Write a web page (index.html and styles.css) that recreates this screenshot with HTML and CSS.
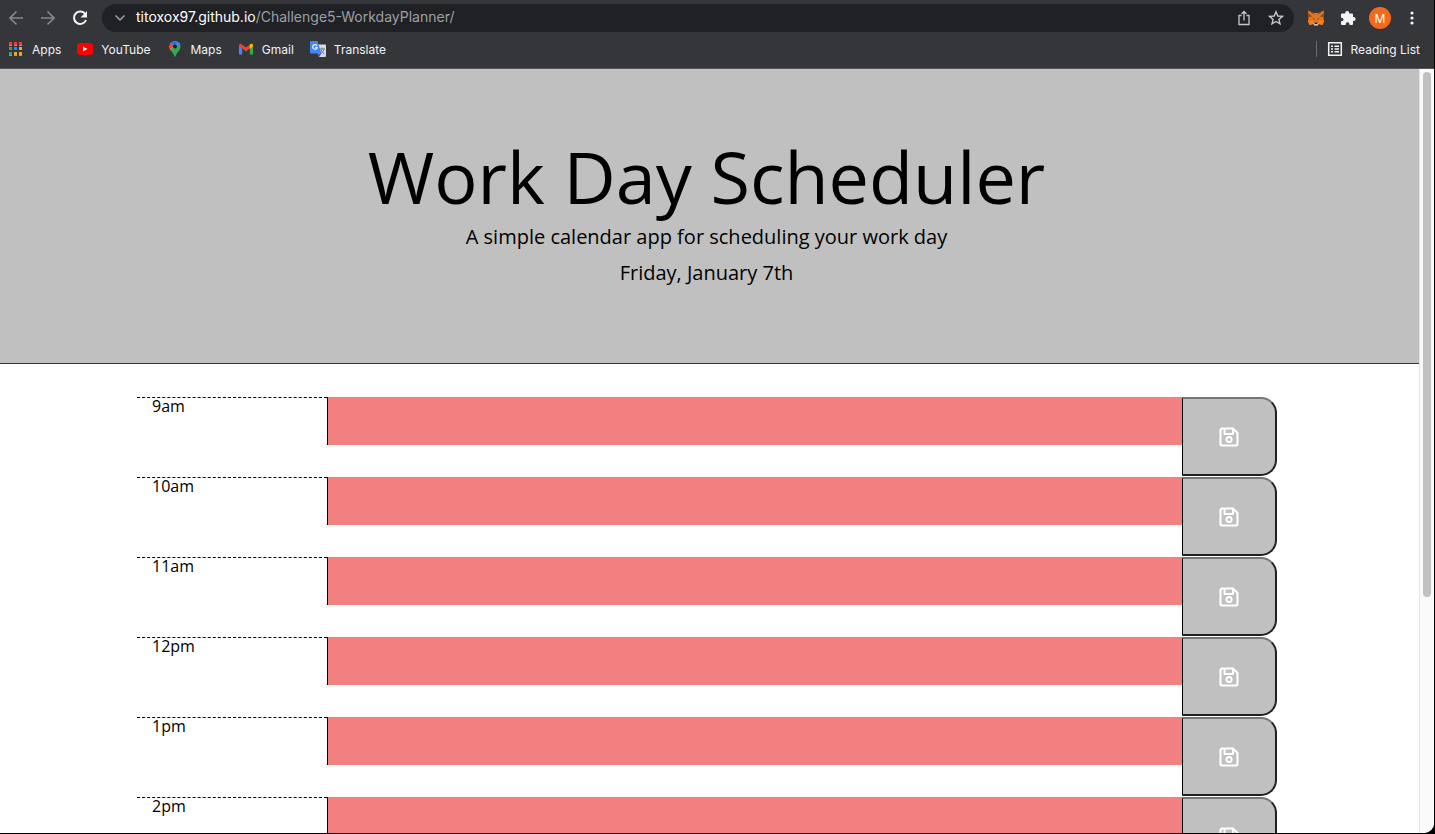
FILE: index.html
```html
<!DOCTYPE html>
<html lang="en">
<head>
<meta charset="utf-8">
<title>Work Day Scheduler</title>
<link rel="stylesheet" href="styles.css">
</head>
<body>
<svg class="defs" aria-hidden="true">
  <symbol id="save" viewBox="0 0 20 20"><g fill="none" stroke="#fff" stroke-width="2" stroke-linejoin="round"><path d="M2.500 1.500H14L18.500 6v11q0 1.500-1.500 1.500H3Q1.500 18.500 1.500 17V3q0-1.500 1.500-1.500z"/><path d="M5.500 1.500V7H14V1.500"/><circle cx="10" cy="12.500" r="2.600"/></g></symbol>
</svg>
<div class="window">
  <nav class="toolbar">
    <button class="tool dim" aria-label="Back"><svg width="16" height="16" viewBox="0 0 16 16"><path d="M15 8H2.500M8.500 1.500L2 8l6.500 6.500" fill="none" stroke="currentColor" stroke-width="1.700"/></svg></button>
    <button class="tool dim" aria-label="Forward"><svg width="16" height="16" viewBox="0 0 16 16"><path d="M1 8h12.500M7.500 1.500L14 8l-6.500 6.500" fill="none" stroke="currentColor" stroke-width="1.700"/></svg></button>
    <button class="tool" aria-label="Reload"><svg width="16" height="16" viewBox="0 0 16 16"><path d="M13.500 4.500A6.200 6.200 0 1 0 14 10" fill="none" stroke="currentColor" stroke-width="2"/><path d="M15 1v6.500H8.500z" fill="currentColor"/></svg></button>
    <div class="address">
      <svg width="12" height="12" viewBox="0 0 12 12"><path d="M1.500 3.500L6 8l4.500-4.500" fill="none" stroke="#9aa0a6" stroke-width="1.500"/></svg>
      <span class="url"><span class="host">titoxox97.github.io</span>/Challenge5-WorkdayPlanner/</span>
      <button class="tool soft" aria-label="Share"><svg width="16" height="16" viewBox="0 0 16 16"><path d="M5.500 5.500H3V14.500H13V5.500H10.500M8 10.500V2M5.500 4L8 1.500 10.500 4" fill="none" stroke="currentColor" stroke-width="1.300"/></svg></button>
      <button class="tool soft" aria-label="Bookmark"><svg width="16" height="16" viewBox="0 0 16 16"><path d="M8 1.800l1.800 4.200 4.600.4-3.500 3 1.100 4.500-4-2.400-4 2.400 1.100-4.500-3.500-3 4.600-.4z" fill="none" stroke="currentColor" stroke-width="1.400"/></svg></button>
    </div>
    <button class="tool" aria-label="Wallet"><svg width="16" height="16" viewBox="0 0 16 16"><path d="M0 .5L5.500 3h5L16 .5 15.500 8l.5 3-1.500 4-3.500-1-1.500 1.500h-3L5 14l-3.500 1L0 11l.5-3z" fill="#e2761b"/><path d="M0 .5L6.500 5 5.500 3zM16 .5L9.500 5l1-2zM.5 7L4.500 6.500 0 3zM15.500 7l-4-.5L16 3z" fill="#9c4618"/><path d="M0 11l5-.5L5 14l-3.500 1zM16 11l-5-.5v3.500l3.500 1z" fill="#f5841f"/><path d="M4 8.300l2.500.4v1zM12 8.300l-2.500.4v1z" fill="#4a3a3a"/><path d="M5 13.500l2-1h2l2 1-1.500 2h-3z" fill="#d7c1b3"/><path d="M6.500 12.500h3v1.500h-3z" fill="#222"/></svg></button>
    <button class="tool" aria-label="Extensions"><svg width="16" height="16" viewBox="0 0 16 16"><path d="M1 4.500q0-1 1-1H5.200V3a2 2 0 0 1 4 0v.5H12q1 0 1 1V7h.6a2 2 0 0 1 0 4H13v3q0 1-1 1H9.500v-.8a1.900 1.900 0 0 0-3.800 0v.8H2q-1 0-1-1v-2.700h.7a1.800 1.800 0 0 0 0-3.600H1z" fill="#f1f3f4"/></svg></button>
    <button class="avatar" aria-label="Profile">M</button>
    <button class="tool" aria-label="Menu"><svg width="16" height="16" viewBox="0 0 16 16" fill="#f1f3f4"><circle cx="8" cy="3" r="1.600"/><circle cx="8" cy="8" r="1.600"/><circle cx="8" cy="13" r="1.600"/></svg></button>
  </nav>
  <nav class="bookmarks">
    <a href="#"><svg width="16" height="16" viewBox="0 0 16 16"><path d="M1 1h3v3H1zM6 1h3v3H6zM11 1h3v3h-3z" fill="#ea4335"/><path d="M1 6h3v3H1z" fill="#34a853"/><path d="M6 6h3v3H6z" fill="#1a8cff"/><path d="M11 6h3v3h-3zM11 11h3v3h-3zM6 11h3v3H6z" fill="#f0a52c"/><path d="M1 11h3v3H1z" fill="#34a853"/><path d="M1 4h3v1H1zM6 4h3v1H6zM11 4h3v1h-3zM1 14h3v1H1zM6 14h3v1H6zM11 14h3v1h-3z" fill="#9a9a9a"/></svg>Apps</a>
    <a href="#"><svg width="16" height="16" viewBox="0 0 16 16"><rect y="2" width="16" height="12" rx="3" fill="#f00"/><path d="M6 5.500v5L10.500 8z" fill="#fff"/></svg>YouTube</a>
    <a href="#"><svg width="16" height="16" viewBox="0 0 16 16"><path d="M8 0a5.500 5.500 0 0 1 5.500 5.500C13.500 10 9.500 11 8.500 15.500q-.5 1-1 0C6.500 11 2.500 10 2.500 5.500A5.500 5.500 0 0 1 8 0z" fill="#34a853"/><path d="M3.500 9L10.500 1A5.500 5.500 0 0 0 3 3.500Q1.800 6.500 3.500 9z" fill="#fbbc04"/><path d="M2.500 5.500Q2.500 3.500 3.800 2L7 5 3 8.500Q2.500 7 2.500 5.500z" fill="#ea4335"/><path d="M3.800 2Q7-1 10.800.8L7 5z" fill="#1a73e8"/><path d="M10.800.8Q13 2 13.400 4.500L9 6 7 5z" fill="#4285f4"/><circle cx="8" cy="5.500" r="2" fill="#202124"/></svg>Maps</a>
    <a href="#"><svg width="16" height="16" viewBox="0 0 16 16"><path d="M1 4v9.500h3.200V7z" fill="#4285f4"/><path d="M15 4v9.500h-3.200V7z" fill="#34a853"/><path d="M1 4.500Q1 2.500 3 2.800L8 6.500l5-3.700q2-.3 2 1.700L8 10.500z" fill="#ea4335"/><path d="M11.800 3.700l1.200-.9q2-.3 2 2v.8l-3.200 2.300z" fill="#fbbc04"/></svg>Gmail</a>
    <a href="#"><svg width="16" height="16" viewBox="0 0 16 16"><path d="M6 3.500h9q1 0 1 1V15q0 1-1 1H9z" fill="#dadce0"/><path d="M8 12.500h3.500L9 16z" fill="#3c4bb0"/><path d="M1 0h6.500L11.500 12.500H1q-1 0-1-1V1q0-1 1-1z" fill="#4285f4"/><path d="M7 4.800A2.300 2.300 0 1 0 7.200 6.500H5.200" fill="none" stroke="#fff" stroke-width="1.100"/><path d="M9.500 8H15M12 6.500V8M14 8q-1 3-3 4.500M11 9q1 2.500 3.500 4" fill="none" stroke="#6b7785"/></svg>Translate</a>
    <a href="#" class="reading"><svg width="16" height="16" viewBox="0 0 16 16"><path d="M1.700 1.700h12.600v12.600H1.700zM4 5.200h2M7.500 5.200H12M4 8h2M7.500 8H12M4 10.800h2M7.500 10.800H12" fill="none" stroke="#f1f3f4" stroke-width="1.500"/></svg>Reading List</a>
  </nav>
  <div class="viewport">
    <div class="page">
      <header class="banner">
        <h1>Work Day Scheduler</h1>
        <p>A simple calendar app for scheduling your work day</p>
        <p>Friday, January 7th</p>
      </header>
      <main class="container">
        <div class="row"><label class="hour" for="h9">9am</label><textarea id="h9"></textarea><button class="save" aria-label="Save"><svg width="20" height="20"><use href="#save"/></svg></button></div>
        <div class="row"><label class="hour" for="h10">10am</label><textarea id="h10"></textarea><button class="save" aria-label="Save"><svg width="20" height="20"><use href="#save"/></svg></button></div>
        <div class="row"><label class="hour" for="h11">11am</label><textarea id="h11"></textarea><button class="save" aria-label="Save"><svg width="20" height="20"><use href="#save"/></svg></button></div>
        <div class="row"><label class="hour" for="h12">12pm</label><textarea id="h12"></textarea><button class="save" aria-label="Save"><svg width="20" height="20"><use href="#save"/></svg></button></div>
        <div class="row"><label class="hour" for="h13">1pm</label><textarea id="h13"></textarea><button class="save" aria-label="Save"><svg width="20" height="20"><use href="#save"/></svg></button></div>
        <div class="row"><label class="hour" for="h14">2pm</label><textarea id="h14"></textarea><button class="save" aria-label="Save"><svg width="20" height="20"><use href="#save"/></svg></button></div>
      </main>
    </div>
    <div class="scrollbar"><div class="thumb"></div></div>
  </div>
</div>
</body>
</html>
```
FILE: styles.css
```css
* { box-sizing: border-box; }
body {
  margin: 0;
  background: #000;
  font-family: "Open Sans", "Noto Sans", sans-serif;
  color: #000;
}
.defs { display: none; }
svg { display: block; flex: none; }
button { margin: 0; padding: 0; border: 0; background: none; font: inherit; }

.window {
  display: flex;
  flex-direction: column;
  height: calc(100vh - 1px);
  margin-right: 1px;
  overflow: hidden;
  border-radius: 0 0 10px 0;
  background: #fff;
}

.toolbar, .bookmarks {
  display: flex;
  flex: none;
  align-items: center;
  background: #35363a;
  color: #f1f3f4;
  font-family: Inter, Roboto, sans-serif;
}
.toolbar { gap: 16px; height: 36px; padding: 0 14px 0 8px; }
.tool { color: #f1f3f4; }
.dim { color: #85878a; }
.soft { color: #c4c7ca; }
.address {
  display: flex;
  flex: 1;
  align-items: center;
  gap: 16px;
  height: 28px;
  margin-left: -2px;
  margin-right: -2px;
  padding: 0 10px 0 12px;
  border-radius: 14px;
  background: #202124;
}
.url { flex: 1; margin-left: -6px; font-size: 14px; line-height: 16px; padding-bottom: 2px; color: #9aa0a6; }
.host { color: #fff; }
.avatar {
  width: 22px;
  height: 22px;
  margin: 0 -3px;
  border-radius: 50%;
  background: #f4691b;
  color: #fff;
  font-size: 12px;
}

.bookmarks {
  gap: 16px;
  height: 33px;
  padding: 0 14px 6px 8px;
  border-bottom: 1px solid #55565a;
  font-size: 12px;
}
.bookmarks a {
  display: flex;
  align-items: center;
  gap: 8px;
  color: #f1f3f4;
  text-decoration: none;
}
.bookmarks .reading {
  margin-left: auto;
  padding-left: 10px;
  border-left: 1px solid #6b6c70;
}

.viewport { display: flex; flex: 1; min-height: 0; }
.page { flex: 1; overflow: hidden; }
.banner {
  padding: 72px 6px 72px 0;
  border-bottom: 1px solid #333;
  background: #c0c0c0;
  text-align: center;
}
.banner h1 { margin: 0 0 8px; font-size: 72px; font-weight: 400; line-height: 70px; }
.banner p { margin: 0; font-size: 20px; line-height: 36px; }
.container {
  max-width: 1145px;
  margin: 33px auto 0;
  padding-right: 5px;
}
.row {
  display: grid;
  grid-template-columns: 2fr 9fr 1fr;
  align-items: start;
  height: 80px;
}
.hour {
  padding: 0 15px;
  border-top: 1px dashed #000;
  font-size: 16px;
  line-height: 16px;
}
.row textarea {
  display: block;
  width: 100%;
  height: 48px;
  border: 0;
  border-left: 1px solid #000;
  border-radius: 0;
  background: #f38080;
  resize: none;
}
.save {
  display: flex;
  align-items: center;
  justify-content: center;
  height: 79px;
  border: 2px solid #202020;
  border-top-color: #767676;
  border-left: 1px solid #000;
  border-radius: 0 16px 16px 0;
  background: #c0c0c0;
}

.scrollbar {
  width: 15px;
  padding: 3px 3px 0;
  border-left: 1px solid #e4e4e4;
  background: #fafafa;
}
.thumb { height: 69%; border-radius: 4px; background: #c1c1c1; }
```
